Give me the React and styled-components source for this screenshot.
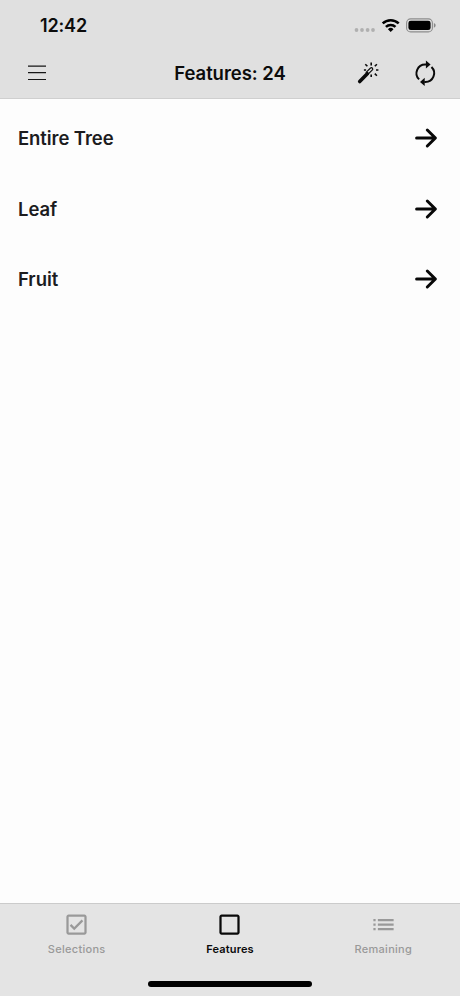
import React from 'react';
import styled, { createGlobalStyle } from 'styled-components';
import { MdList, MdOutlineCheckBox, MdCheckBoxOutlineBlank } from 'react-icons/md';

const GlobalStyle = createGlobalStyle`
    * {
        box-sizing: border-box;
    }
    body {
        margin: 0;
        font-family: Inter, 'Liberation Sans', sans-serif;
    }
`
const Screen = styled.div`
    display: flex;
    flex-direction: column;
    width: 460px;
    height: 996px;
    background: #fdfdfd;
    overflow: hidden;
`
const Header = styled.header`
    flex: none;
    height: 99px;
    background: #e0e0e0;
    border-bottom: 1px solid #cfcfcf;
`
const StatusBar = styled.div`
    display: flex;
    justify-content: space-between;
    align-items: center;
    height: 50px;
    padding: 0 23px 0 40px;
`
const Time = styled.span`
    padding-top: 2px;
    font-size: 18px;
    line-height: 22px;
    font-weight: 600;
    color: #0c0c0c;
    letter-spacing: -0.15px;
`
const NavBar = styled.div`
    display: grid;
    grid-template-columns: 115px 1fr 115px;
    align-items: center;
    height: 46px;
`
const NavLeft = styled.div`
    display: flex;
    padding-left: 28px;
`
const NavRight = styled.div`
    display: flex;
    justify-content: space-between;
    padding: 0 22px 0 10px;
`
const Title = styled.h1`
    margin: 0;
    font-size: 18.5px;
    line-height: 24px;
    font-weight: 600;
    color: #0c0c0c;
    text-align: center;
    white-space: nowrap;
    letter-spacing: -0.05px;
`
const List = styled.main`
    flex: 1;
    padding-top: 4px;
`
const Row = styled.div`
    display: flex;
    justify-content: space-between;
    align-items: center;
    height: 70.5px;
    padding: 0 22px 0 18px;
`
const Label = styled.span`
    font-size: 18.5px;
    line-height: 24px;
    font-weight: 600;
    color: #1c1c1e;
    letter-spacing: -0.08px;
`
const TabBar = styled.footer`
    display: flex;
    flex-direction: column;
    align-items: center;
    flex: none;
    height: 93px;
    background: #e4e4e4;
    border-top: 1px solid #cbcbcb;
`
const Tabs = styled.nav`
    display: grid;
    grid-template-columns: repeat(3, 1fr);
    width: 100%;
    height: 77px;
    padding-top: 7px;
`
const Tab = styled.div`
    display: flex;
    flex-direction: column;
    align-items: center;
    color: ${props => (props.$active ? '#0a0a0a' : '#999')};
`
const TabLabel = styled.span`
    margin-top: 4px;
    font-size: 11px;
    line-height: 14px;
    font-weight: ${props => (props.$active ? 600 : 500)};
    letter-spacing: ${props => (props.$active ? '0.15px' : '0.28px')};
`
const HomeIndicator = styled.div`
    width: 164px;
    height: 6px;
    border-radius: 3px;
    background: #000;
`

const features = ['Entire Tree', 'Leaf', 'Fruit'];

const tabs = [
    { label: 'Selections', Icon: MdOutlineCheckBox },
    { label: 'Features', Icon: MdCheckBoxOutlineBlank, active: true },
    { label: 'Remaining', Icon: MdList },
];

function StatusIcons() {
    return (
        <svg width="83" height="20" viewBox="354 15 83 20">
            <g fill="#b0b0b0">
                <circle cx="356.5" cy="30" r="1.9" />
                <circle cx="362" cy="30" r="1.9" />
                <circle cx="367.6" cy="30" r="1.9" />
                <circle cx="373" cy="30" r="1.9" />
            </g>
            <g fill="none" stroke="#000" strokeWidth="2.5">
                <path d="M382.7 23.4a11.6 11.6 0 0 1 16 0" />
                <path d="M385.9 26.9a6.9 6.9 0 0 1 9.6 0" />
            </g>
            <path d="M387.9 29.2a4 4 0 0 1 5.6 0l-2.8 2.8z" fill="#000" />
            <rect x="406.6" y="18.9" width="25.8" height="13" rx="4" fill="none" stroke="#8c8c8c" strokeWidth="1.1" />
            <rect x="408.4" y="20.7" width="22.2" height="9.4" rx="2.4" fill="#000" />
            <path d="M433.9 23.1c2.3.9 2.3 3.7 0 4.6z" fill="#888" />
        </svg>
    )
}

function MenuIcon() {
    return (
        <svg width="18" height="16" viewBox="0 0 18 16" stroke="#161616" strokeWidth="1.2">
            <path d="M0 1.2h18M0 7.6h18M0 14.5h18" />
        </svg>
    )
}

function WandIcon() {
    return (
        <svg width="26" height="26" viewBox="355 60 26 26" fill="none" stroke="#0a0a0a" strokeLinecap="round">
            <path d="M359.7 81.5l7.6-7.8" strokeWidth="3.6" />
            <path d="M366.1 72.4l4.4-4.4q1.3-.7 2 .4t-.4 1.8l-4.2 4.2" strokeWidth="1.2" />
            <path d="M371.2 62.6v3M365.3 64.2l2.1 2.1M363.9 70h2.2M376.9 64.2l-2.1 2.1M376 70h2.4M374.8 73.6l2.1 2.1M371.2 74.4v2.6" strokeWidth="1.6" strokeLinecap="butt" />
        </svg>
    )
}

function SyncIcon() {
    return (
        <svg width="26" height="26" viewBox="412 60 26 26" fill="none" stroke="#0a0a0a" strokeWidth="2">
            <path d="M419.1 79.4a8.7 8.7 0 0 1 6.2-14.9h1" />
            <path d="M431.5 67a8.7 8.7 0 0 1-6.2 14.9h-1" />
            <path d="M425.9 60.4l4.7 4.1-4.7 4.1zM424.7 86l-4.7-4.1 4.7-4.1z" fill="#0a0a0a" stroke="none" />
        </svg>
    )
}

function ArrowIcon() {
    return (
        <svg width="24" height="22" viewBox="0 0 24 22" fill="none" stroke="#080808" strokeWidth="3" strokeLinecap="round" strokeLinejoin="round">
            <path d="M2.6 11h18.4M13.3 3l8.1 8-8.1 8" />
        </svg>
    )
}

function App() {
    return (
        <Screen>
            <GlobalStyle />
            <Header>
                <StatusBar>
                    <Time>12:42</Time>
                    <StatusIcons />
                </StatusBar>
                <NavBar>
                    <NavLeft>
                        <MenuIcon />
                    </NavLeft>
                    <Title>Features: {24}</Title>
                    <NavRight>
                        <WandIcon />
                        <SyncIcon />
                    </NavRight>
                </NavBar>
            </Header>
            <List>
                {features.map(name => (
                    <Row key={name}>
                        <Label>{name}</Label>
                        <ArrowIcon />
                    </Row>
                ))}
            </List>
            <TabBar>
                <Tabs>
                    {tabs.map(({ label, Icon, active }) => (
                        <Tab key={label} $active={active}>
                            <Icon size={27} />
                            <TabLabel $active={active}>{label}</TabLabel>
                        </Tab>
                    ))}
                </Tabs>
                <HomeIndicator />
            </TabBar>
        </Screen>
    )
}

export default App;
